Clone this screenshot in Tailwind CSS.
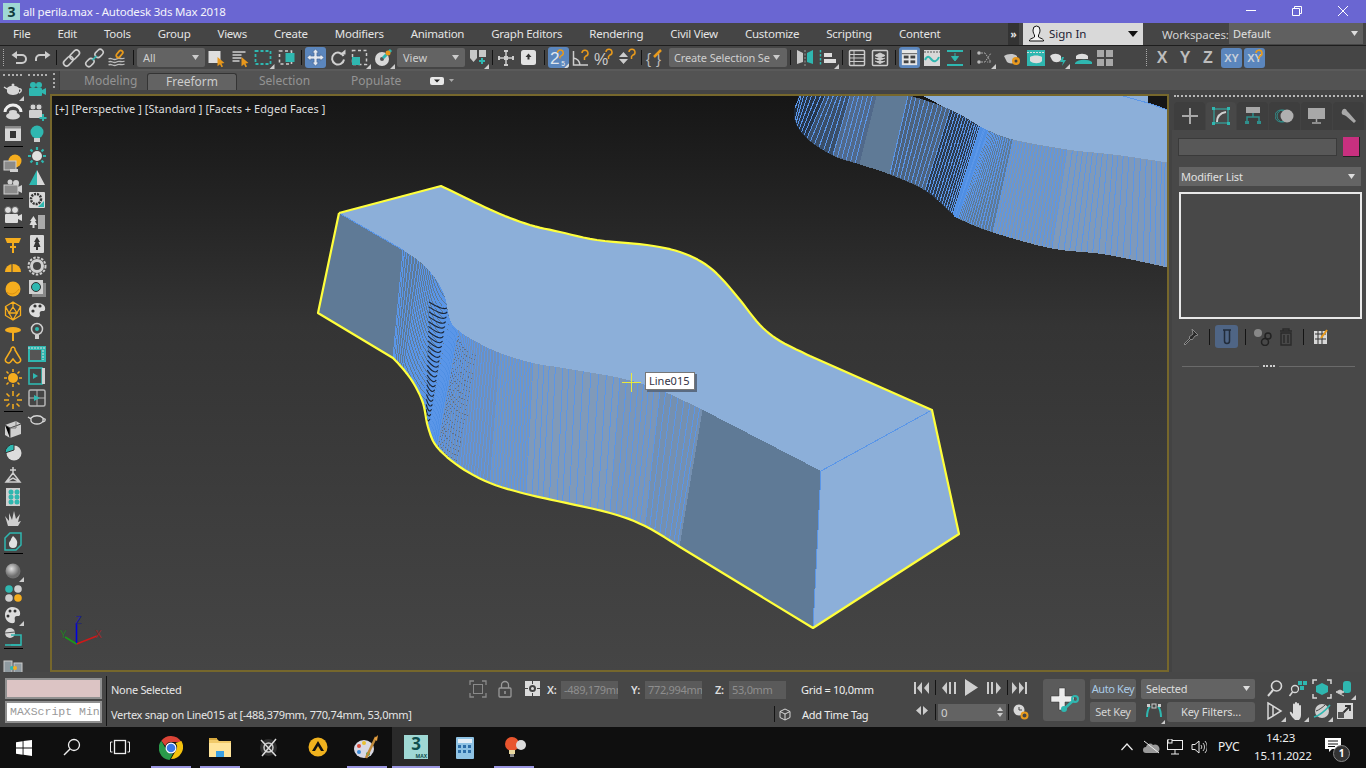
<!DOCTYPE html>
<html lang="en"><head><meta charset="utf-8"><title>all perila.max - Autodesk 3ds Max 2018</title>
<script src="https://cdn.jsdelivr.net/npm/@tailwindcss/browser@4"></script></head>
<body class="w-[1366px] h-[768px] overflow-hidden bg-[#444444] font-['Noto_Sans',sans-serif] text-[12px] text-[#e6e6e6] flex flex-col select-none">

<!-- title bar -->
<header class="h-[23px] shrink-0 bg-[#6a66d2] flex items-center text-white">
  <div class="ml-[3px] w-[17px] h-[17px] bg-[#9fd8d4] text-[#123c3c] font-bold text-[14px] leading-[17px] text-center">3</div>
  <span class="ml-[3px] text-[11.500px] tracking-[-0.2px] text-[#f4f4fb]">all perila.max - Autodesk 3ds Max 2018</span>
  <div class="ml-auto flex items-center">
    <svg class="w-[46px] h-[23px]" viewBox="0 0 46 23"><path d="M18 10.500h10" stroke="#fff"/></svg>
    <svg class="w-[46px] h-[23px]" viewBox="0 0 46 23"><path d="M18.500 8.500h7v7h-7zM20.500 8.500v-2h7v7h-2" fill="none" stroke="#fff"/></svg>
    <svg class="w-[46px] h-[23px]" viewBox="0 0 46 23"><path d="M18 6l10 10M28 6L18 16" stroke="#fff"/></svg>
  </div>
</header>

<!-- menu bar -->
<nav class="h-[23px] shrink-0 bg-[#454545] border-b border-[#1e1e1e] flex items-center relative">
  <div class="pl-[13px] flex gap-[27px] text-[11.500px] tracking-[-0.25px] text-[#e4e4e4]">
    <span>File</span><span>Edit</span><span>Tools</span><span>Group</span><span>Views</span><span>Create</span><span>Modifiers</span><span>Animation</span><span>Graph Editors</span><span>Rendering</span><span>Civil View</span><span>Customize</span><span>Scripting</span><span>Content</span>
  </div>
  <div class="absolute left-[1008px] top-0 w-[11px] h-[22px] bg-[#333333] text-[10px] leading-[22px] text-center font-bold">»</div>
  <div class="absolute left-[1023px] top-0 w-[120px] h-[22px] bg-[#d9d9d9] text-[#222233] flex items-center">
    <svg class="ml-[5px] w-[17px] h-[18px]" viewBox="0 0 17 18"><path d="M5 5a3.500 4 0 0 1 7 0c0 3-1 4-1.500 5v2c1 1 4 1.500 5 3v1H1.500v-1c1-1.500 4-2 5-3v-2C6 9 5 8 5 5z" fill="#f4f4f4" stroke="#111"/></svg>
    <span class="ml-[4px] text-[11.500px]">Sign In</span>
    <svg class="ml-auto mr-[5px] w-[10px] h-[6px]" viewBox="0 0 10 6"><path d="M0 0h10L5 6z" fill="#111"/></svg>
  </div>
  <span class="absolute left-[1162px] top-[3px] text-[11.500px] tracking-[-0.1px] text-[#d4d4d4]">Workspaces:</span>
  <div class="absolute left-[1229px] top-0 w-[134px] h-[21px] bg-[#606060] pl-[4px] leading-[21px] text-[11px] text-[#e0e0e0]">Default
    <svg class="absolute right-[5px] top-[8px] w-[7px] h-[5px]" viewBox="0 0 7 5"><path d="M0 0h7L3.500 5z" fill="#ddd"/></svg></div>
</nav>

<!-- main toolbar -->
<div class="h-[25px] shrink-0 bg-[#454545] border-b-2 border-[#5a5a5a] flex items-center">
  <div class="w-[9px]"><div class="ml-[3px] w-[2px] h-[17px] border-l border-dotted border-[#aaaaaa]"></div></div>
  <svg class="w-[22px] h-[22px] shrink-0" viewBox="0 0 22 22"><path d="M5 8h8a4 4 0 0 1 0 8H7" fill="none" stroke="#ccc" stroke-width="2"/><path d="M8 4L2.500 8 8 12z" fill="#ccc"/></svg>
  <svg class="w-[22px] h-[22px] shrink-0" viewBox="0 0 22 22"><path d="M17 8H9a4 4 0 0 0 -4 4v2" fill="none" stroke="#ccc" stroke-width="2"/><path d="M14 4l5.500 4L14 12z" fill="#ccc"/></svg>
  <div class="w-[7px] flex justify-center"><div class="w-[1px] h-[15px] bg-[#141414]"></div></div>
  <svg class="w-[23px] h-[22px] shrink-0" viewBox="0 0 22 22"><g fill="none" stroke="#ccc" stroke-width="1.600" transform="rotate(-45 11 11)"><rect x="1" y="8" width="11" height="6" rx="3"/><rect x="10" y="8" width="11" height="6" rx="3"/></g></svg>
  <svg class="w-[23px] h-[22px] shrink-0" viewBox="0 0 22 22"><g fill="none" stroke-width="1.600" transform="rotate(-45 11 11)"><rect x="0" y="8" width="9" height="6" rx="3" stroke="#ccc"/><rect x="13" y="8" width="9" height="6" rx="3" stroke="#ccc"/><path d="M8 11h6" stroke="#36b6b2"/></g></svg>
  <svg class="w-[23px] h-[22px] shrink-0" viewBox="0 0 22 22"><g fill="none" stroke-width="1.300"><path d="M2 12c3-2 5 2 8 0s5 1 8-1M2 15c3-2 5 2 8 0s5 1 8-1M2 18c3-2 5 2 8 0s5 1 8-1" stroke="#bbb"/><rect x="9" y="5" width="8" height="4" rx="2" transform="rotate(-50 13 7)" stroke="#e79a1c" stroke-width="1.800"/></g></svg>
  <div class="w-[8px] flex justify-center"><div class="w-[1px] h-[15px] bg-[#141414]"></div></div>
  <div class="w-[68px] h-[19px] bg-[#636363] rounded-[2px] relative pl-[6px] leading-[19px] text-[11px] text-[#cfcfcf]">All<svg class="absolute right-[6px] top-[7px] w-[7px] h-[5px]" viewBox="0 0 7 5"><path d="M0 0h7L3.500 5z" fill="#ccc"/></svg></div>
  <svg class="w-[23px] h-[22px] shrink-0" viewBox="0 0 22 22"><rect x="3" y="4" width="12" height="12" fill="#dedede"/><path d="M12 10l7 6-3 .5 1.500 3-1.500.7-1.500-3-2.500 2z" fill="#e8981c"/></svg>
  <svg class="w-[23px] h-[22px] ml-[1px] shrink-0" viewBox="0 0 22 22"><path d="M3 5h13M3 8h9M3 11h9M3 14h7" stroke="#cfcfcf" stroke-width="1.700"/><path d="M12 10l7 6-3 .5 1.500 3-1.500.7-1.500-3-2.500 2z" fill="#e8981c"/></svg>
  <svg class="w-[23px] h-[22px] shrink-0" viewBox="0 0 22 22"><rect x="3" y="4" width="15" height="13" fill="none" stroke="#2fb7b0" stroke-width="1.800" stroke-dasharray="3 2"/><path d="M22 17v5h-5z" fill="#ccc"/></svg>
  <svg class="w-[23px] h-[22px] shrink-0" viewBox="0 0 22 22"><rect x="4" y="4" width="12" height="13" fill="none" stroke="#ccc" stroke-width="1.600" stroke-dasharray="3 2.500"/><rect x="10" y="6" width="9" height="9" fill="#2fb7b0"/></svg>
  <div class="w-[7px] flex justify-center"><div class="w-[1px] h-[15px] bg-[#141414]"></div></div>
  <svg class="w-[21px] h-[21px] shrink-0 bg-[#5b86bd] rounded-[3px]" viewBox="0 0 22 22"><path d="M11 2l3.500 4h-2v3.500H16v-2l4 3.500-4 3.500v-2h-3.500V16h2L11 20l-3.500-4h2v-3.500H6v2L2 11l4-3.500v2h3.500V6h-2z" fill="#e4e9f0" stroke="#3b5e8e" stroke-width=".6"/></svg>
  <svg class="w-[22px] h-[22px] ml-[1px] shrink-0" viewBox="0 0 22 22"><path d="M16.500 9a6 6 0 1 0 .5 3.500" fill="none" stroke="#d0d0d0" stroke-width="2"/><path d="M12.500 7.500h6v-5z" fill="#d0d0d0"/></svg>
  <svg class="w-[22px] h-[22px] shrink-0" viewBox="0 0 22 22"><rect x="3.500" y="3.500" width="14" height="14" fill="none" stroke="#ccc" stroke-width="1.500" stroke-dasharray="3 2.500"/><rect x="3" y="10" width="8" height="8" fill="#2fb7b0"/><path d="M22 17v5h-5z" fill="#ccc"/></svg>
  <svg class="w-[22px] h-[22px] ml-[2px] shrink-0" viewBox="0 0 22 22"><circle cx="9" cy="12" r="7" fill="#d8d8d8"/><circle cx="9" cy="12" r="2" fill="#555"/><path d="M10 11l8-8" stroke="#2fb7b0" stroke-width="3"/><circle cx="15" cy="6" r="2.500" fill="#e8981c"/><path d="M22 17v5h-5z" fill="#ccc"/></svg>
  <div class="w-[68px] ml-[2px] h-[19px] bg-[#636363] rounded-[2px] relative pl-[6px] leading-[19px] text-[11px] text-[#cfcfcf]">View<svg class="absolute right-[6px] top-[7px] w-[7px] h-[5px]" viewBox="0 0 7 5"><path d="M0 0h7L3.500 5z" fill="#ccc"/></svg></div>
  <svg class="w-[22px] h-[22px] ml-[2px] shrink-0" viewBox="0 0 22 22"><path d="M3 3h7v8l-3.500 4L3 11zM12 3h7v7h-7z" fill="#c8c8c8"/><path d="M12 14h6M15 11v6" stroke="#2fb7b0" stroke-width="2"/><path d="M22 17v5h-5z" fill="#ccc"/></svg>
  <div class="w-[6px] flex justify-center"><div class="w-[1px] h-[15px] bg-[#141414]"></div></div>
  <svg class="w-[22px] h-[22px] shrink-0" viewBox="0 0 22 22"><path d="M11 3v16M3 11h16" stroke="#ccc" stroke-width="1.500"/><rect x="9" y="9" width="4" height="4" fill="#ccc"/><path d="M4 9v4M18 9v4M9 4h4M9 18h4" stroke="#ccc" stroke-width="2"/></svg>
  <svg class="w-[22px] h-[22px] ml-[1px] shrink-0" viewBox="0 0 22 22"><rect x="3" y="3" width="15" height="15" rx="2.500" fill="#e2e2e2"/><path d="M10.500 6.500l3 3.500h-2v2.500h-2V10h-2z" fill="#333"/></svg>
  <div class="w-[8px] flex justify-center"><div class="w-[1px] h-[15px] bg-[#141414]"></div></div>
  <svg class="w-[21px] h-[21px] shrink-0 bg-[#5b86bd] rounded-[3px]" viewBox="0 0 22 22"><text x="2" y="18" font-size="18" font-family="Liberation Sans" fill="#dfe5ee">2</text><path d="M10 6a3 3 0 1 1 4 3l-1.500 1.500V12" fill="none" stroke="#e89a1c" stroke-width="1.500"/><text x="14" y="20" font-size="7" font-family="Liberation Sans" fill="#eee">5</text><path d="M22 17v5h-5z" fill="#ddd"/></svg>
  <svg class="w-[22px] h-[22px] ml-[1px] shrink-0" viewBox="0 0 22 22"><path d="M3.500 4v14H18M3.500 11A8 8 0 0 1 10 18" fill="none" stroke="#ccc" stroke-width="1.500"/><path d="M12 6a3 3 0 1 1 4 3l-1.500 1.500V13" fill="none" stroke="#e89a1c" stroke-width="1.500"/></svg>
  <svg class="w-[22px] h-[22px] ml-[1px] shrink-0" viewBox="0 0 22 22"><text x="1" y="18" font-size="16" font-family="Liberation Sans" fill="#ccc">%</text><path d="M13 5a3 3 0 1 1 4 3l-1.500 1.500V12" fill="none" stroke="#e89a1c" stroke-width="1.500"/></svg>
  <svg class="w-[22px] h-[22px] ml-[1px] shrink-0" viewBox="0 0 22 22"><path d="M3 10l4.500-5 4.500 5zM3 12h9l-4.500 5z" fill="#ccc"/><path d="M13 5a3 3 0 1 1 4 3l-1.500 1.500V12" fill="none" stroke="#e89a1c" stroke-width="1.500"/></svg>
  <div class="w-[6px] flex justify-center"><div class="w-[1px] h-[15px] bg-[#141414]"></div></div>
  <svg class="w-[22px] h-[22px] shrink-0" viewBox="0 0 22 22"><text x="2" y="17" font-size="15" font-family="Liberation Sans" fill="#bbb">{</text><text x="12" y="17" font-size="15" font-family="Liberation Sans" fill="#bbb">}</text><path d="M10 10l7-7" stroke="#e89a1c" stroke-width="2.500"/></svg>
  <div class="w-[118px] ml-[3px] h-[19px] bg-[#636363] rounded-[2px] relative pl-[5px] leading-[19px] text-[11px] tracking-[-0.15px] text-[#cfcfcf] overflow-hidden whitespace-nowrap">Create Selection Se<svg class="absolute right-[7px] top-[7px] w-[7px] h-[5px]" viewBox="0 0 7 5"><path d="M0 0h7L3.500 5z" fill="#ccc"/></svg></div>
  <div class="w-[7px] flex justify-center"><div class="w-[1px] h-[15px] bg-[#141414]"></div></div>
  <svg class="w-[22px] h-[22px] shrink-0" viewBox="0 0 22 22"><path d="M9 6L3 3v14l6-2z" fill="#c8c8c8"/><path d="M13 6l6-3v14l-6-2z" fill="#2fb7b0"/><path d="M11 3v16" stroke="#999" stroke-dasharray="2 1.500"/></svg>
  <svg class="w-[22px] h-[22px] ml-[1px] shrink-0" viewBox="0 0 22 22"><path d="M3.500 3v16" stroke="#2fb7b0" stroke-width="1.500" stroke-dasharray="2.500 1.500"/><path d="M7 6h8v4H7zM7 12h12v4H7z" fill="#ddd"/><path d="M22 17v5h-5z" fill="#ccc"/></svg>
  <div class="w-[7px] flex justify-center"><div class="w-[1px] h-[15px] bg-[#141414]"></div></div>
  <svg class="w-[22px] h-[22px] shrink-0" viewBox="0 0 22 22"><rect x="3.500" y="3.500" width="15" height="15" rx="1" fill="none" stroke="#ccc" stroke-width="1.500"/><path d="M3 7.500h16M3 11h16M3 14.500h16M8 4v14" stroke="#ccc"/></svg>
  <svg class="w-[22px] h-[22px] ml-[1px] shrink-0" viewBox="0 0 22 22"><rect x="3.500" y="3.500" width="15" height="15" rx="1" fill="none" stroke="#ccc" stroke-width="1.500"/><path d="M11 6l5 2.500-5 2.500-5-2.500zM6 11l5 2.500 5-2.500M6 14l5 2.500 5-2.500" fill="#ccc" stroke="#ccc"/></svg>
  <div class="w-[8px] flex justify-center"><div class="w-[1px] h-[15px] bg-[#141414]"></div></div>
  <svg class="w-[21px] h-[21px] shrink-0 bg-[#5b86bd] rounded-[3px]" viewBox="0 0 22 22"><rect x="3" y="3" width="16" height="16" fill="#e6e6e6"/><path d="M3 7h16" stroke="#555"/><rect x="5" y="9" width="5" height="3" fill="#444"/><rect x="12" y="9" width="5" height="3" fill="#444"/><rect x="5" y="14" width="5" height="3" fill="#444"/><rect x="12" y="14" width="5" height="3" fill="#444"/></svg>
  <svg class="w-[22px] h-[22px] ml-[1px] shrink-0" viewBox="0 0 22 22"><rect x="3" y="3" width="16" height="16" fill="#d8d8d8"/><path d="M3 5h16" stroke="#555" stroke-dasharray="2 1"/><path d="M4 13c3-6 5-2 7 0s5 2 7-3" fill="none" stroke="#2fb7b0" stroke-width="2"/></svg>
  <svg class="w-[22px] h-[22px] ml-[1px] shrink-0" viewBox="0 0 22 22"><path d="M3 4h16M3 18h16" stroke="#2fb7b0" stroke-width="2"/><path d="M11 6v6M7.500 9.500L11 14l3.500-4.500z" stroke="#2fb7b0" fill="#2fb7b0"/></svg>
  <div class="w-[8px] flex justify-center"><div class="w-[1px] h-[15px] bg-[#141414]"></div></div>
  <svg class="w-[22px] h-[22px] shrink-0" viewBox="0 0 22 22"><path d="M7 6h4l6 9h-4M7 15h4l6-9" fill="none" stroke="#aaa" stroke-dasharray="2 1"/><g fill="#bbb"><circle cx="5" cy="6" r="1.800"/><circle cx="5" cy="15" r="1.800"/></g><path d="M22 17v5h-5z" fill="#ccc"/></svg>
  <svg class="w-[22px] h-[22px] ml-[5px] shrink-0" viewBox="0 0 22 22"><path d="M3 9c3-2 9-3 13 0v5c-2 3-8 3-10 1z" fill="#c8c8c8"/><circle cx="15" cy="14" r="4" fill="#e8981c"/><circle cx="15" cy="14" r="1.500" fill="#444"/></svg>
  <svg class="w-[22px] h-[22px] ml-[2px] shrink-0" viewBox="0 0 22 22"><rect x="2" y="3" width="18" height="16" fill="#2fb7b0"/><path d="M2 5.500h18" stroke="#ddd" stroke-dasharray="2 1"/><path d="M5 10c3-2 9-2 12 0v4c-2 3-9 3-12 0z" fill="#ddd"/></svg>
  <svg class="w-[22px] h-[22px] ml-[1px] shrink-0" viewBox="0 0 22 22"><path d="M2 9c3-3 8-3 11 0v4c-2 3-7 3-9 0z" fill="#ddd"/><path d="M14 10l-2 5h3l-1 4 4-6h-3l1-3z" fill="#2fb7b0"/><path d="M22 17v5h-5z" fill="#ccc"/></svg>
  <svg class="w-[22px] h-[22px] ml-[2px] shrink-0" viewBox="0 0 22 22"><path d="M4 9c3-3 9-3 12 0v3H4z" fill="#ddd"/><path d="M3 16c3-4 13-4 17-1v2H3z" fill="#2fb7b0"/></svg>
  <svg class="w-[22px] h-[22px] shrink-0" viewBox="0 0 22 22"><g fill="#a8a8a8"><rect x="3" y="3" width="7" height="7"/><rect x="12" y="3" width="7" height="7"/><rect x="3" y="12" width="7" height="7"/><rect x="12" y="12" width="7" height="7"/></g></svg>
  <div class="ml-[30px] w-[1px] h-[17px] border-l border-dotted border-[#aaaaaa]"></div>
  <div class="w-[22px] ml-[4px] text-center font-['Liberation_Sans',sans-serif] font-bold text-[16px] text-[#bdbdbd]">X</div>
  <div class="w-[22px] ml-[1px] text-center font-['Liberation_Sans',sans-serif] font-bold text-[16px] text-[#bdbdbd]">Y</div>
  <div class="w-[22px] ml-[1px] text-center font-['Liberation_Sans',sans-serif] font-bold text-[16px] text-[#bdbdbd]">Z</div>
  <div class="w-[21px] h-[20px] ml-[2px] bg-[#5b86bd] rounded-[3px] text-center leading-[20px] font-['Liberation_Sans',sans-serif] font-bold text-[11px] text-[#c8d0da]">XY</div>
  <div class="w-[21px] h-[20px] ml-[2px] bg-[#5b86bd] rounded-[3px] text-center leading-[20px] font-['Liberation_Sans',sans-serif] font-bold text-[11px] text-[#c8d0da] relative">XY<svg class="absolute left-[6px] top-[0px] w-[14px] h-[12px]" viewBox="0 0 14 12"><path d="M6 5a3 3 0 1 1 4 3l-1 1v2" fill="none" stroke="#e89a1c" stroke-width="1.600"/></svg></div>
</div>

<!-- body row -->
<div class="flex-1 flex min-h-0">
  <!-- left command bar -->
  <aside class="w-[50px] shrink-0 bg-[#454545] relative">
    <div class="absolute left-[3px] top-[3px] w-[19px] border-t-2 border-dotted border-[#b0b0b0]"></div>
    <div class="absolute left-[28px] top-[3px] w-[19px] border-t-2 border-dotted border-[#b0b0b0]"></div>
    <div class="flex pt-[8px] pl-[2px]">
      <div class="w-[22px] flex flex-col items-center">
        <svg class="w-[22px] h-[22px] shrink-0" viewBox="0 0 22 22"><path d="M5 9c3-3 9-3 12 0v4c-1 4-11 4-12 0z" fill="#d6d6d6"/><path d="M5 10L2 8M17 10c3-1 3 3 0 4" stroke="#d6d6d6" stroke-width="1.500" fill="none"/><circle cx="11" cy="6" r="1.500" fill="#d6d6d6"/><path d="M22 17v5h-5z" fill="#ccc"/></svg>
        <svg class="w-[22px] h-[22px] shrink-0" viewBox="0 0 22 22"><path d="M3 11a8 7 0 0 1 16 0" fill="none" stroke="#eee" stroke-width="3"/><ellipse cx="11" cy="15" rx="7" ry="3.500" fill="#d6d6d6"/><ellipse cx="11" cy="11" rx="4" ry="2" fill="#d6d6d6"/></svg>
        <svg class="w-[22px] h-[22px] shrink-0" viewBox="0 0 22 22"><rect x="3" y="3" width="16" height="15" fill="#d6d6d6"/><rect x="3" y="3" width="16" height="2.500" fill="#888"/><path d="M8 8h6v7H8z" fill="#333"/></svg>
        <div class="h-[7px] shrink-0 w-[19px] border-t border-black mt-[1px]"></div>
        <svg class="w-[22px] h-[22px] -mt-[1px] shrink-0" viewBox="0 0 22 22"><circle cx="13" cy="9" r="6.500" fill="#f5ad1e"/><rect x="2" y="9" width="12" height="9" fill="#8a8a8a" stroke="#d0d0d0"/><rect x="8" y="17" width="8" height="3" fill="#d0d0d0"/></svg>
        <svg class="w-[22px] h-[22px] mt-[2px] shrink-0" viewBox="0 0 22 22"><circle cx="14" cy="7" r="3" fill="#d0d0d0"/><circle cx="8" cy="6" r="2.500" fill="#d0d0d0"/><rect x="2" y="9" width="14" height="9" fill="#8a8a8a" stroke="#d0d0d0"/><path d="M16 11l4-2v8l-4-2z" fill="#d0d0d0"/></svg>
        <div class="h-[8px] shrink-0 w-[19px] border-t border-black mt-[0px]"></div>
        <svg class="w-[22px] h-[22px] -mt-[2px] shrink-0" viewBox="0 0 22 22"><circle cx="6" cy="6" r="3.500" fill="#ddd" stroke="#555"/><circle cx="13" cy="6" r="3.500" fill="#ddd" stroke="#555"/><rect x="3" y="10" width="13" height="9" rx="1" fill="#ddd"/><path d="M16 12l4-2v7l-4-2z" fill="#ddd"/></svg>
        <div class="h-[7px] shrink-0 w-[19px] border-t border-black mt-[1px]"></div>
        <svg class="w-[22px] h-[22px] shrink-0" viewBox="0 0 22 22"><path d="M3 4h16l-2 5H5z" fill="#f5ad1e"/><path d="M11 9v10M8 13h6" stroke="#f5ad1e" stroke-width="2"/></svg>
        <svg class="w-[22px] h-[22px] shrink-0" viewBox="0 0 22 22"><path d="M3 16a8 8 0 0 1 16 0z" fill="#f5ad1e"/><path d="M10 8v8" stroke="#454545"/></svg>
        <svg class="w-[22px] h-[22px] shrink-0" viewBox="0 0 22 22"><circle cx="11" cy="11" r="7.500" fill="#f5ad1e"/><path d="M5 14c3 3 8 3 12-3" fill="none" stroke="#d98f10"/></svg>
        <svg class="w-[22px] h-[22px] shrink-0" viewBox="0 0 22 22"><path d="M11 2l7.500 4.500v9L11 20l-7.500-4.500v-9zM11 7l4 6H7zM11 2v5M3.500 6.500L7 13M18.500 6.500L15 13M11 20l-4-7M11 20l4-7" fill="none" stroke="#f5ad1e" stroke-width="1.300"/></svg>
        <svg class="w-[22px] h-[22px] shrink-0" viewBox="0 0 22 22"><ellipse cx="11" cy="8" rx="8" ry="3" fill="#f5ad1e"/><path d="M11 10v9" stroke="#f5ad1e" stroke-width="2"/></svg>
        <svg class="w-[22px] h-[22px] shrink-0" viewBox="0 0 22 22"><path d="M11 3a2.500 2.500 0 0 0 -2 3L3.500 15a3 3 0 0 0 5 3l2.500-3 2.500 3a3 3 0 0 0 5-3L13 6a2.500 2.500 0 0 0 -2-3z" fill="none" stroke="#f5ad1e" stroke-width="1.500"/></svg>
        <svg class="w-[22px] h-[22px] mt-[1px] shrink-0" viewBox="0 0 22 22"><circle cx="11" cy="11" r="5" fill="#f5ad1e"/><path d="M11 2v3M11 17v3M2 11h3M17 11h3M4.500 4.500l2 2M15.500 15.500l2 2M4.500 17.500l2-2M15.500 6.500l2-2" stroke="#f5ad1e" stroke-width="1.500"/></svg>
        <svg class="w-[22px] h-[22px] shrink-0" viewBox="0 0 22 22"><path d="M11 2v5M11 15v5M2 11h5M15 11h5M4.500 4.500l3 3M14.500 14.500l3 3M4.500 17.500l3-3M14.500 7.500l3-3" stroke="#f5ad1e" stroke-width="1.500"/></svg>
        <div class="h-[7px] shrink-0 w-[19px] border-t border-black"></div>
        <svg class="w-[22px] h-[22px] shrink-0" viewBox="0 0 22 22"><path d="M3 7l11-4 5 3v10l-11 4-5-3z" fill="#cfcfcf"/><path d="M3 7l5 3v10M8 10l11-4" stroke="#444"/><path d="M14 3v7l-6 0" stroke="#777" fill="none"/></svg>
        <svg class="w-[22px] h-[22px] mt-[1px] shrink-0" viewBox="0 0 22 22"><circle cx="12" cy="12" r="7.500" fill="#dcdcdc"/><path d="M3 12a9 9 0 0 1 9-9v6z" fill="#2fb7b0" stroke="#333"/></svg>
        <svg class="w-[22px] h-[22px] mt-[1px] shrink-0" viewBox="0 0 22 22"><path d="M11 3v8M11 9l-7 9h14zM4 18l7-4 7 4M8 6h6" fill="none" stroke="#cfcfcf" stroke-width="1.500"/></svg>
        <svg class="w-[22px] h-[22px] shrink-0" viewBox="0 0 22 22"><rect x="4" y="2" width="14" height="18" fill="#cfcfcf"/><g fill="#2fb7b0"><circle cx="9" cy="6" r="2.500"/><circle cx="15" cy="6" r="2.500"/><circle cx="9" cy="11" r="2.500"/><circle cx="15" cy="11" r="2.500"/><circle cx="9" cy="16" r="2.500"/><circle cx="15" cy="16" r="2.500"/></g></svg>
        <svg class="w-[22px] h-[22px] shrink-0" viewBox="0 0 22 22"><path d="M3 8l4 5 0-8 3 7 2-9 2 8 4-5-2 8 3-1-3 5H6z" fill="#cfcfcf"/></svg>
        <svg class="w-[22px] h-[22px] shrink-0" viewBox="0 0 22 22"><path d="M3 8l5-5h11v12l-5 5H3z" fill="none" stroke="#2fb7b0" stroke-width="1.500"/><path d="M11 6c3 3 5 5 4 8a4 4 0 0 1 -8 0c0-3 2-3 2-5z" fill="#e2e2e2"/></svg>
        <div class="h-[6px] shrink-0 w-[19px] border-t border-black mt-[1px]"></div>
        <svg class="w-[22px] h-[22px] mt-[1px] shrink-0" viewBox="0 0 22 22"><defs><radialGradient id="sph" cx=".4" cy=".35"><stop offset="0" stop-color="#e0e0e0"/><stop offset="1" stop-color="#6e6e6e"/></radialGradient></defs><circle cx="11" cy="11" r="7.500" fill="url(#sph)"/><path d="M22 17v5h-5z" fill="#ccc"/></svg>
        <svg class="w-[22px] h-[22px] shrink-0" viewBox="0 0 22 22"><circle cx="7" cy="7" r="3.800" fill="#2fb7b0"/><circle cx="16" cy="7" r="3.800" fill="#cfcfcf"/><circle cx="7" cy="16" r="3.800" fill="#cfcfcf"/><circle cx="16" cy="16" r="3.800" fill="#f5ad1e"/></svg>
        <svg class="w-[22px] h-[22px] shrink-0" viewBox="0 0 22 22"><path d="M10 3c6 0 9 4 8 8-1 2-4 0-5 2s1 4-1 6c-5 1-9-3-9-8 0-4 3-8 7-8z" fill="#dcdcdc"/><circle cx="8" cy="7" r="1.500" fill="#333"/><circle cx="13" cy="7" r="1.500" fill="#333"/><circle cx="6" cy="12" r="1.500" fill="#333"/><path d="M22 17v5h-5z" fill="#ccc"/></svg>
        <svg class="w-[22px] h-[22px] shrink-0" viewBox="0 0 22 22"><circle cx="8" cy="7" r="5" fill="#d6d6d6"/><path d="M3 7l10-1" stroke="#555"/><path d="M9 9h10v10H9" fill="none" stroke="#2fb7b0" stroke-width="1.600"/><path d="M3 19h16" stroke="#2fb7b0" stroke-width="1.600"/></svg>
        <div class="h-[7px] shrink-0 w-[19px] border-t border-black"></div>
        <svg class="w-[22px] h-[22px] shrink-0" viewBox="0 0 22 22"><rect x="2" y="6" width="8" height="12" fill="#8f9aa0" stroke="#ccc"/><rect x="12" y="8" width="8" height="10" fill="#8f9aa0" stroke="#ccc"/><circle cx="10" cy="13" r="2" fill="#2fb7b0"/><circle cx="13" cy="13" r="2" fill="#f5ad1e"/></svg>
      </div>
      <div class="w-[24px] ml-[1px] flex flex-col items-center">
        <svg class="w-[22px] h-[22px] shrink-0" viewBox="0 0 22 22"><circle cx="7" cy="6" r="3" fill="#2fb7b0"/><circle cx="13" cy="6" r="3" fill="#2fb7b0"/><rect x="3" y="9" width="13" height="8" rx="1" fill="#2fb7b0"/><path d="M16 11l4-2v7l-4-2z" fill="#2fb7b0"/></svg>
        <svg class="w-[22px] h-[22px] shrink-0" viewBox="0 0 22 22"><circle cx="7" cy="6" r="3" fill="#d0d0d0" stroke="#555"/><circle cx="13" cy="6" r="3" fill="#d0d0d0" stroke="#555"/><rect x="3" y="9" width="13" height="8" rx="1" fill="#d0d0d0"/><path d="M17 13v7M13.500 17h7" stroke="#2fb7b0" stroke-width="2"/></svg>
        <svg class="w-[22px] h-[22px] shrink-0" viewBox="0 0 22 22"><circle cx="11" cy="9" r="6.500" fill="#2fb7b0"/><rect x="8" y="15" width="6" height="4" fill="#cfcfcf"/></svg>
        <svg class="w-[22px] h-[22px] shrink-0" viewBox="0 0 22 22"><circle cx="11" cy="11" r="5" fill="#e0e0e0"/><path d="M11 2v3M11 17v3M2 11h3M17 11h3M4.500 4.500l2 2M15.500 15.500l2 2M4.500 17.500l2-2M15.500 6.500l2-2" stroke="#2fb7b0" stroke-width="2.200"/></svg>
        <svg class="w-[22px] h-[22px] shrink-0" viewBox="0 0 22 22"><path d="M11 3v15H3z" fill="#2fb7b0"/><path d="M11 3l8 15h-8z" fill="#d8d8d8"/></svg>
        <svg class="w-[22px] h-[22px] shrink-0" viewBox="0 0 22 22"><rect x="3" y="3" width="16" height="16" rx="1" fill="#d8d8d8"/><circle cx="10" cy="10" r="5" fill="none" stroke="#333" stroke-width="2.500" stroke-dasharray="2 1"/><path d="M12 18l6-6v6z" fill="#2fb7b0"/></svg>
        <svg class="w-[22px] h-[22px] shrink-0" viewBox="0 0 22 22"><rect x="3" y="4" width="16" height="14" fill="#aaa"/><rect x="3" y="4" width="9" height="14" fill="#444"/><path d="M7.500 5l3 5h-1.500l2 4H8.500v3h-2v-3H3.500l2-4H4z" fill="#ddd"/></svg>
        <svg class="w-[22px] h-[22px] shrink-0" viewBox="0 0 22 22"><rect x="4" y="2" width="14" height="18" rx="1" fill="#d8d8d8"/><path d="M11 4l3 5h-1.500l2 5H12v3h-2v-3H7.500l2-5H8z" fill="#333"/></svg>
        <svg class="w-[22px] h-[22px] shrink-0" viewBox="0 0 22 22"><circle cx="11" cy="11" r="5.500" fill="none" stroke="#d0d0d0" stroke-width="3"/><circle cx="11" cy="11" r="8.500" fill="none" stroke="#d0d0d0" stroke-width="2" stroke-dasharray="2.500 1.500"/></svg>
        <svg class="w-[22px] h-[22px] shrink-0" viewBox="0 0 22 22"><rect x="6" y="6" width="14" height="14" fill="#888"/><rect x="3" y="3" width="14" height="14" fill="#d0d0d0"/><circle cx="10" cy="10" r="4.500" fill="#2fb7b0" stroke="#333"/></svg>
        <svg class="w-[22px] h-[22px] shrink-0" viewBox="0 0 22 22"><path d="M11 4c6 0 9 3 8 7-1 2-4 0-5 2s1 3-1 5c-5 1-10-2-10-7 0-4 4-7 8-7z" fill="#dcdcdc"/><circle cx="9" cy="7" r="1.600" fill="#333"/><circle cx="14" cy="7" r="1.600" fill="#333"/><circle cx="7" cy="12" r="1.600" fill="#333"/></svg>
        <svg class="w-[22px] h-[22px] shrink-0" viewBox="0 0 22 22"><circle cx="11" cy="8" r="5.500" fill="none" stroke="#cfcfcf" stroke-width="1.500"/><circle cx="11" cy="8" r="2" fill="#2fb7b0"/><path d="M9 14h4v4H9z" fill="#cfcfcf"/></svg>
        <svg class="w-[22px] h-[22px] shrink-0" viewBox="0 0 22 22"><rect x="2" y="3" width="18" height="16" fill="#2fb7b0"/><path d="M2 5h18" stroke="#ddd" stroke-dasharray="2 1"/><rect x="4" y="7" width="11" height="10" fill="#555"/><path d="M17 7v10" stroke="#ddd" stroke-dasharray="2 1"/></svg>
        <svg class="w-[22px] h-[22px] shrink-0" viewBox="0 0 22 22"><rect x="3" y="3" width="13" height="16" fill="none" stroke="#2fb7b0" stroke-width="1.600"/><rect x="16" y="3" width="3" height="16" fill="#cfcfcf"/><path d="M7 8l5 3-5 3z" fill="#2fb7b0"/></svg>
        <svg class="w-[22px] h-[22px] shrink-0" viewBox="0 0 22 22"><rect x="3" y="3" width="16" height="16" rx="1.500" fill="none" stroke="#b5b5b5" stroke-width="1.500"/><path d="M11 3v16M3 11h16" stroke="#b5b5b5"/><path d="M8 8l6 3-6 3z" fill="#2fb7b0"/></svg>
        <svg class="w-[22px] h-[22px] shrink-0" viewBox="0 0 22 22"><path d="M5 9c3-3 9-3 12 0v3c-2 4-10 4-12 0zM5 10L2 8M17 10c3-1 3 2 0 3" fill="none" stroke="#d6d6d6" stroke-width="1.300"/></svg>
      </div>
    </div>
  </aside>

  <div class="flex-1 flex flex-col min-w-0">
    <!-- ribbon -->
    <div class="h-[19px] shrink-0 flex items-stretch">
      <div class="w-[9px] flex items-center pl-[3px]"><div class="w-[2px] h-[15px] border-l-2 border-dotted border-[#aaaaaa]"></div></div>
      <div class="flex-1 bg-[#535353] border-l border-[#3c3c3c] relative flex items-center text-[12px] text-[#939393]">
        <span class="ml-[24px] w-[51px]">Modeling</span>
        <span class="ml-[12px] w-[90px] h-[17px] mt-[2px] self-start bg-[#636363] border border-b-0 border-[#343434] rounded-t-[3px] text-center leading-[16px] text-[#cdcdcd]">Freeform</span>
        <span class="ml-[22px] w-[92px]">Selection</span>
        <span class="w-[79px]">Populate</span>
        <svg class="w-[14px] h-[8px]" viewBox="0 0 14 8"><rect width="14" height="8" rx="2" fill="#e8e8e8"/><path d="M4 2.500h6L7 5.500z" fill="#222"/></svg>
        <svg class="ml-[5px] w-[5px] h-[3px]" viewBox="0 0 5 3"><path d="M0 0h5L2.500 3z" fill="#aaa"/></svg>
      </div>
    </div>
    <div class="h-[4px] shrink-0"></div>
    <div class="flex-1 flex min-h-0">
      <!-- viewport -->
      <main class="flex-1 min-w-0 relative border-2 border-[#76672c] overflow-hidden bg-linear-to-b from-[#161616] via-[#343434] via-40% to-[#454545]">
        <svg id="scene" class="absolute left-0 top-0" width="1115" height="574" viewBox="52 96 1115 574" shape-rendering="crispEdges">
          <defs><clipPath id="sideclip"><polygon id="sidepoly" points="0,0"/></clipPath></defs>
          <g id="far">
            <polygon id="fartop" points="923,96 1168,163 1168,96" fill="#8cafd9"/>
            <polygon points="1148,96 1148,103 1168,110 1168,96" fill="#161616"/>
            <path d="M1123 96L1148 103L1168 110" stroke="#5a96e8" fill="none"/>
          </g>
          <g id="farmesh"></g>
          <g id="mesh"></g>
          <polygon id="topface" points="339,213 441,186 932,410 821,471" fill="#8cafd9"/>
          <polygon points="821,471 932,410 959,534 813,628" fill="#8cafd9"/>
          <path d="M821 471L813 628M821 471L932 410M339 213L403 250" stroke="#5a96e8" fill="none"/>
          <polyline id="outline" shape-rendering="auto" points="339,213 441,186" fill="none" stroke="#ffff3c" stroke-width="2.200" stroke-linejoin="round"/>
          <path d="M622 382h19M631.500 373v19" stroke="#e8e83c"/>
          <g shape-rendering="auto">
            <path d="M76.500 644V623" stroke="#0000e0" stroke-width="1.600"/><path d="M76.500 644L97 636" stroke="#d01818" stroke-width="1.600"/><path d="M76.500 644L65 637" stroke="#1a9a1a" stroke-width="1.600"/>
            <text x="75.500" y="624" font-size="10" fill="#0000e0" font-family="Liberation Sans" stroke="#3e3e3e" stroke-width=".3">Z</text>
            <text x="95" y="638" font-size="10" fill="#d01818" font-family="Liberation Sans" stroke="#3e3e3e" stroke-width=".3">X</text>
            <text x="60" y="638" font-size="10" fill="#1a9a1a" font-family="Liberation Sans" stroke="#3e3e3e" stroke-width=".3">Y</text>
          </g>
        </svg>
        <div class="absolute left-[3px] top-[5px] text-[11px] leading-[16px] text-[#dedede] tracking-[0.05px] whitespace-pre">[+] [Perspective ] [Standard ] [Facets + Edged Faces ]</div>
        <div class="absolute left-[593px] top-[276px] w-[50px] h-[18px] bg-white border border-[#777777] text-[11px] leading-[16px] pl-[3px] text-[#333344] shadow-[2px_2px_0_#5a6b82]">Line015</div>
      </main>
      <!-- right command panel -->
      <aside class="w-[197px] shrink-0 bg-[#434343] relative">
        <div class="absolute left-[5px] right-[3px] top-[1px] border-t-2 border-dotted border-[#b8b8b8]"></div>
        <div class="flex pt-[8px] pl-[5px] gap-[1px] h-[36px]">
          <div class="w-[31px] bg-[#3e3e3e] rounded-t-[4px] flex items-center justify-center"><svg class="w-[18px] h-[18px]" viewBox="0 0 18 18"><path d="M9 1v16M1 9h16" stroke="#a8a8a8" stroke-width="2"/></svg></div>
          <div class="w-[30px] bg-[#484848] rounded-t-[4px] flex items-center justify-center"><svg class="w-[20px] h-[20px]" viewBox="0 0 20 20"><rect x="3" y="3" width="14" height="14" fill="none" stroke="#2fb7b0"/><g fill="#2fb7b0"><rect x="1" y="1" width="3" height="3"/><rect x="16" y="1" width="3" height="3"/><rect x="1" y="16" width="3" height="3"/><rect x="16" y="16" width="3" height="3"/></g><path d="M6 16c0-6 3-9 9-10" fill="none" stroke="#d0d0d0" stroke-width="2"/></svg></div>
          <div class="w-[31px] bg-[#3e3e3e] rounded-t-[4px] flex items-center justify-center"><svg class="w-[18px] h-[18px]" viewBox="0 0 18 18"><rect x="2" y="0" width="14" height="6" fill="#a8a8a8"/><path d="M9 6v4M3 14v-4h12v4" fill="none" stroke="#2f8f8c" stroke-width="1.500"/><rect x="1" y="14" width="4" height="3" fill="#2f8f8c"/><rect x="13" y="14" width="4" height="3" fill="#2f8f8c"/></svg></div>
          <div class="w-[31px] bg-[#3e3e3e] rounded-t-[4px] flex items-center justify-center"><svg class="w-[19px] h-[14px]" viewBox="0 0 19 14"><circle cx="6" cy="7" r="6" fill="none" stroke="#2f8f8c"/><circle cx="8" cy="7" r="6" fill="none" stroke="#2f8f8c"/><circle cx="12" cy="7" r="6.500" fill="#b0b0b0"/></svg></div>
          <div class="w-[31px] bg-[#3e3e3e] rounded-t-[4px] flex items-center justify-center"><svg class="w-[17px] h-[16px]" viewBox="0 0 17 16"><rect width="17" height="11" fill="#a8a8a8"/><path d="M8.500 11v3M4 15h9" stroke="#a8a8a8" stroke-width="1.500"/></svg></div>
          <div class="w-[31px] bg-[#3e3e3e] rounded-t-[4px] flex items-center justify-center"><svg class="w-[18px] h-[18px]" viewBox="0 0 18 18"><path d="M2 4c1-3 4-3 5 0l2 2 7 8-2 2-8-7-2-1c-2 0-3-2-2-4z" fill="#a8a8a8"/></svg></div>
        </div>
        <div class="absolute left-[3px] right-0 top-[36px] bottom-0 bg-[#484848]">
          <div class="absolute left-[6px] top-[8px] w-[159px] h-[18px] bg-[#585858] border border-[#3a3a3a]"></div>
          <div class="absolute left-[171px] top-[7px] w-[17px] h-[20px] bg-[#c8307f] border border-[#222222] border-l-0 border-t-0"></div>
          <div class="absolute left-[7px] top-[37px] w-[182px] h-[19px] bg-[#646464] text-[11px] tracking-[-0.2px] leading-[19px] pl-[2px] text-[#e0e0e0]">Modifier List<svg class="absolute right-[6px] top-[7px] w-[7px] h-[5px]" viewBox="0 0 7 5"><path d="M0 0h7L3.500 5z" fill="#ddd"/></svg></div>
          <div class="absolute left-[7px] top-[62px] w-[183px] h-[127px] border-2 border-[#e8e8e8] bg-[#484848]"></div>
          <div class="absolute left-[6px] top-[195px] w-[183px] h-[23px] flex items-center">
            <svg class="ml-[2px] w-[20px] h-[20px]" viewBox="0 0 20 20"><path d="M12 2l6 6-3 1-3 4-1-1-6 6-1-1 6-6-1-1 4-3z" fill="#2a2a2a" stroke="#888"/></svg>
            <div class="ml-[9px] w-[1px] h-[16px] bg-[#141414]"></div>
            <div class="ml-[5px] w-[23px] h-[23px] rounded-[3px] bg-[#4f6585] flex items-center justify-center"><svg class="w-[10px] h-[16px]" viewBox="0 0 10 16"><path d="M1 1h8M2.500 1v11a2.500 2.500 0 0 0 5 0V1" fill="none" stroke="#222c3a" stroke-width="1.500"/></svg></div>
            <div class="ml-[7px] w-[1px] h-[16px] bg-[#141414]"></div>
            <svg class="ml-[7px] w-[20px] h-[18px]" viewBox="0 0 20 18"><circle cx="5" cy="5" r="4" fill="#888"/><circle cx="12" cy="14" r="3.500" fill="none" stroke="#222" stroke-width="1.500"/><circle cx="15" cy="8" r="3" fill="none" stroke="#222" stroke-width="1.500"/></svg>
            <svg class="ml-[6px] w-[14px] h-[18px]" viewBox="0 0 14 18"><path d="M1 3h12M4 3V1h6v2M2 5h10v12H2zM5 7v8M9 7v8" fill="none" stroke="#2a2a2a" stroke-width="1.400"/></svg>
            <div class="ml-[10px] w-[1px] h-[16px] bg-[#141414]"></div>
            <svg class="ml-[9px] w-[16px] h-[16px]" viewBox="0 0 16 16"><rect x="1" y="2" width="13" height="13" fill="#d8d8d8"/><path d="M2 5h11M5 2v13M2 10h11M9 2v13" stroke="#333"/><path d="M8 9l6-8" stroke="#e89a1c" stroke-width="2"/></svg>
          </div>
          <div class="absolute left-[10px] top-[235px] w-[173px] flex items-center">
            <div class="flex-1 border-t border-[#6a6a6a]"></div>
            <div class="w-[12px] mx-[4px] h-[3px] border-t-2 border-dotted border-[#cfcfcf]"></div>
            <div class="flex-1 border-t border-[#6a6a6a]"></div>
          </div>
        </div>
      </aside>
    </div>
  </div>
</div>

<!-- status area -->
<section class="h-[55px] shrink-0 bg-[#474747] relative text-[11px] tracking-[-0.3px]">
  <div class="absolute left-[5px] top-[6px] w-[97px] h-[21px] bg-[#dcc4c4] border-2 border-[#909090]"></div>
  <div class="absolute left-[5px] top-[29px] w-[97px] h-[22px] bg-white border-2 border-[#909090] font-['Liberation_Mono',monospace] text-[11.500px] tracking-normal leading-[17px] pl-[3px] text-[#999999] overflow-hidden whitespace-nowrap">MAXScript Mini</div>
  <div class="absolute left-[106px] top-[4px] w-[1px] h-[50px] bg-[#141414]"></div>
  <span class="absolute left-[111px] top-[10px] text-[#e6e6e6]">None Selected</span>
  <span class="absolute left-[111px] top-[35px] text-[#e6e6e6]">Vertex snap on Line015 at [-488,379mm, 770,74mm, 53,0mm]</span>
  <svg class="absolute left-[469px] top-[8px] w-[18px] h-[18px]" viewBox="0 0 18 18"><path d="M1 5V1h4M13 1h4v4M17 13v4h-4M5 17H1v-4" fill="none" stroke="#8a8a8a" stroke-width="1.300"/><rect x="4.500" y="4.500" width="9" height="9" fill="none" stroke="#8a8a8a"/></svg>
  <svg class="absolute left-[497px] top-[8px] w-[16px] h-[18px]" viewBox="0 0 16 18"><rect x="2" y="8" width="12" height="9" rx="1" fill="none" stroke="#999" stroke-width="1.300"/><path d="M4.500 8V5a3.500 3.500 0 0 1 7 0v3" fill="none" stroke="#999" stroke-width="1.300"/><path d="M8 11v3" stroke="#999" stroke-width="1.500"/></svg>
  <svg class="absolute left-[525px] top-[9px] w-[15px] h-[15px]" viewBox="0 0 15 15"><rect width="15" height="15" fill="#dcdcdc"/><circle cx="7.500" cy="7.500" r="3.500" fill="#444"/><circle cx="7.500" cy="7.500" r="1.500" fill="#dcdcdc"/><path d="M7.500 0v3M7.500 12v3M0 7.500h3M12 7.500h3" stroke="#444"/></svg>
  <span class="absolute left-[547px] top-[10px] font-semibold text-[#dddddd]">X:</span>
  <div class="absolute left-[561px] top-[9px] w-[57px] h-[18px] bg-[#5a5a5a] text-[#8e8e8e] text-[11px] leading-[18px] pl-[3px] overflow-hidden whitespace-nowrap">-489,179mm</div>
  <span class="absolute left-[631px] top-[10px] font-semibold text-[#dddddd]">Y:</span>
  <div class="absolute left-[645px] top-[9px] w-[57px] h-[18px] bg-[#5a5a5a] text-[#8e8e8e] text-[11px] leading-[18px] pl-[3px] overflow-hidden whitespace-nowrap">772,994mm</div>
  <span class="absolute left-[715px] top-[10px] font-semibold text-[#dddddd]">Z:</span>
  <div class="absolute left-[729px] top-[9px] w-[57px] h-[18px] bg-[#5a5a5a] text-[#8e8e8e] text-[11px] leading-[18px] pl-[3px] overflow-hidden whitespace-nowrap">53,0mm</div>
  <span class="absolute left-[801px] top-[10px] text-[#eeeeee]">Grid = 10,0mm</span>
  <div class="absolute left-[774px] top-[34px] w-[1px] h-[16px] bg-[#141414]"></div>
  <svg class="absolute left-[779px] top-[36px] w-[12px] h-[13px]" viewBox="0 0 12 13"><path d="M6 1l5 2.500v6L6 12 1 9.500v-6zM1 3.500L6 6l5-2.500M6 6v6" fill="none" stroke="#d8d8d8"/></svg>
  <span class="absolute left-[802px] top-[35px] text-[#eeeeee]">Add Time Tag</span>
  <!-- playback -->
  <div class="absolute left-[914px] top-[7px] flex items-center text-[#c8c8c8]">
    <svg class="w-[16px] h-[12px]" viewBox="0 0 16 12"><path d="M1 0v12" stroke="#ccc" stroke-width="2"/><path d="M8 0v12L3 6zM15 0v12L10 6z" fill="#ccc"/></svg>
    <div class="ml-[5px] w-[1px] h-[15px] bg-[#141414]"></div>
    <svg class="ml-[5px] w-[16px] h-[12px]" viewBox="0 0 16 12"><path d="M6 0v12L1 6z" fill="#ccc"/><path d="M9 0v12M14 0v12" stroke="#ccc" stroke-width="2"/></svg>
    <svg class="ml-[7px] w-[15px] h-[17px]" viewBox="0 0 15 17"><path d="M1 0l13 8.500L1 17z" fill="#cfcfcf"/></svg>
    <svg class="ml-[7px] w-[16px] h-[12px]" viewBox="0 0 16 12"><path d="M2 0v12M6 0v12" stroke="#ccc" stroke-width="2"/><path d="M10 0v12l5-6z" fill="#ccc"/></svg>
    <div class="ml-[5px] w-[1px] h-[15px] bg-[#141414]"></div>
    <svg class="ml-[3px] w-[16px] h-[12px]" viewBox="0 0 16 12"><path d="M1 0v12L6 6zM8 0v12l5-6z" fill="#ccc"/><path d="M15 0v12" stroke="#ccc" stroke-width="2"/></svg>
  </div>
  <svg class="absolute left-[916px] top-[34px] w-[12px] h-[9px]" viewBox="0 0 12 9"><path d="M5 0v9L0 4.500zM7 0v9l5-4.500z" fill="#ccc"/></svg>
  <div class="absolute left-[935px] top-[32px] w-[1px] h-[16px] bg-[#141414]"></div>
  <div class="absolute left-[938px] top-[32px] w-[68px] h-[17px] bg-[#636363] pl-[3px] text-[11.500px] leading-[17px] text-[#d0d0d0]">0<svg class="absolute right-[3px] top-[3px] w-[6px] h-[10px]" viewBox="0 0 6 10"><path d="M0 4l3-4 3 4zM0 6l3 4 3-4z" fill="#ccc"/></svg></div>
  <div class="absolute left-[1008px] top-[32px] w-[1px] h-[16px] bg-[#141414]"></div>
  <svg class="absolute left-[1013px] top-[32px] w-[16px] h-[16px]" viewBox="0 0 16 16"><circle cx="6" cy="6" r="5.500" fill="#d8d8d8"/><path d="M6 3v3h3" stroke="#444" fill="none"/><circle cx="11.500" cy="11.500" r="3" fill="none" stroke="#e89a1c" stroke-width="2"/></svg>
  <!-- key -->
  <div class="absolute left-[1043px] top-[7px] w-[42px] h-[42px] bg-[#5b5b5b] rounded-[3px] flex items-center justify-center">
    <svg class="w-[30px] h-[28px]" viewBox="0 0 30 28"><path d="M10 2h6v8h9v6h-9v8h-6v-8H2v-6h8z" fill="#ececec" stroke="#333" stroke-width=".5"/><path d="M15 23l10-9" stroke="#2fb7b0" stroke-width="2.500"/><circle cx="26" cy="13" r="3" fill="none" stroke="#2fb7b0" stroke-width="2"/><circle cx="15" cy="23" r="3" fill="#2fb7b0"/></svg>
  </div>
  <div class="absolute left-[1090px] top-[7px] w-[46px] h-[20px] bg-[#5e5e5e] rounded-[2px] text-center leading-[20px] text-[#aacbe6] text-[11px] tracking-[-0.4px] whitespace-nowrap">Auto Key</div>
  <div class="absolute left-[1090px] top-[30px] w-[46px] h-[20px] bg-[#5e5e5e] rounded-[2px] text-center leading-[20px] text-[#d4d4d4] text-[11px] whitespace-nowrap">Set Key</div>
  <div class="absolute left-[1141px] top-[7px] w-[114px] h-[20px] bg-[#636363] rounded-[2px] pl-[5px] leading-[20px] text-[#dddddd] text-[11px]">Selected<svg class="absolute right-[5px] top-[7px] w-[7px] h-[5px]" viewBox="0 0 7 5"><path d="M0 0h7L3.500 5z" fill="#ddd"/></svg></div>
  <svg class="absolute left-[1143px] top-[30px] w-[22px] h-[22px]" viewBox="0 0 22 22"><path d="M4 15c0-5 1-8 3-11M18 15c0-5-1-8-3-11" fill="none" stroke="#2fb7b0" stroke-width="2"/><rect x="9" y="2" width="4" height="4" fill="none" stroke="#ccc"/><rect x="4" y="2" width="3" height="3" fill="#ccc"/><rect x="15" y="2" width="3" height="3" fill="#ccc"/><path d="M22 18v4h-4z" fill="#ccc"/></svg>
  <div class="absolute left-[1167px] top-[30px] w-[88px] h-[20px] bg-[#5e5e5e] rounded-[3px] text-center leading-[20px] text-[#dddddd] text-[11px] tracking-[-0.1px]">Key Filters...</div>
  <!-- nav -->
  <div class="absolute left-[1264px] top-[6px] grid grid-cols-4 gap-x-[1px] gap-y-[0px] w-[92px]">
    <svg class="w-[22px] h-[22px]" viewBox="0 0 22 22"><circle cx="12.500" cy="8" r="5" fill="none" stroke="#d8d8d8" stroke-width="1.600"/><path d="M9 12l-5 6" stroke="#d8d8d8" stroke-width="2"/></svg>
    <svg class="w-[22px] h-[22px]" viewBox="0 0 22 22"><circle cx="8" cy="11" r="3.500" fill="none" stroke="#d8d8d8" stroke-width="1.300"/><path d="M5.500 14l-3 4" stroke="#d8d8d8" stroke-width="1.600"/><rect x="11" y="3" width="4" height="4" fill="#2fb7b0"/><rect x="16" y="3" width="4" height="4" fill="#2fb7b0"/><rect x="13" y="8" width="4" height="4" fill="#2fb7b0"/></svg>
    <svg class="w-[22px] h-[22px]" viewBox="0 0 22 22"><path d="M2 6V2h4M16 2h4v4M20 16v4h-4M6 20H2v-4" fill="none" stroke="#d8d8d8" stroke-width="1.500"/><path d="M11 5l6 3v6l-6 3-6-3V8z" fill="#2fb7b0"/></svg>
    <svg class="w-[22px] h-[22px]" viewBox="0 0 22 22"><rect x="9" y="3" width="8" height="12" rx="3" fill="#2fb7b0"/><path d="M2 14l4-2 4 2-4 2zM6 16l4 2" stroke="#ccc" fill="#ccc"/><path d="M22 17v5h-5z" fill="#ccc"/></svg>
    <svg class="w-[22px] h-[22px]" viewBox="0 0 22 22"><path d="M4 3l13 8L4 19zM9 6v10" fill="none" stroke="#d8d8d8" stroke-width="1.500"/><path d="M22 17v5h-5z" fill="#ccc"/></svg>
    <svg class="w-[22px] h-[22px]" viewBox="0 0 22 22"><path d="M8 20c-3-3-6-7-5-8s2 1 3 2V4.500a1 1 0 0 1 2 0V10V3a1 1 0 0 1 2 0v7V4a1 1 0 0 1 2 0v6V6a1 1 0 0 1 2 0v9c0 2-1 4-2 5z" fill="#dcdcdc"/><path d="M22 17v5h-5z" fill="#ccc"/></svg>
    <svg class="w-[22px] h-[22px]" viewBox="0 0 22 22"><circle cx="11" cy="11" r="7" fill="#cfcfcf"/><path d="M3 17c4-1 11-6 16-12" fill="none" stroke="#2fb7b0" stroke-width="1.600"/><path d="M5 11c3-1 7-4 9-6" stroke="#444" fill="none"/><path d="M22 17v5h-5z" fill="#ccc"/></svg>
    <svg class="w-[22px] h-[22px]" viewBox="0 0 22 22"><rect x="3" y="3" width="16" height="16" fill="#d8d8d8"/><path d="M6 16L16 6M11 6h5v5" fill="none" stroke="#333" stroke-width="1.800"/><rect x="4" y="12" width="6" height="6" fill="#555"/></svg>
  </div>
</section>

<!-- taskbar -->
<footer class="h-[41px] shrink-0 bg-[#0f0f0f] relative text-white">
  <svg class="absolute left-[16px] top-[13px] w-[16px] h-[16px]" viewBox="0 0 16 16"><path d="M0 2.200l6.600-1V7.500H0zM7.500 1L16 0v7.500H7.500zM0 8.500h6.600v6.300l-6.600-1zM7.500 8.500H16V16l-8.500-1.200z" fill="#fff"/></svg>
  <svg class="absolute left-[63px] top-[11px] w-[18px] h-[18px]" viewBox="0 0 18 18"><circle cx="11" cy="7" r="5.500" fill="none" stroke="#eee" stroke-width="1.300"/><path d="M7 11l-6 6" stroke="#eee" stroke-width="1.500"/></svg>
  <svg class="absolute left-[110px] top-[12px] w-[20px] h-[16px]" viewBox="0 0 20 16"><rect x="4.500" y="1.500" width="11" height="13" fill="none" stroke="#eee" stroke-width="1.300"/><path d="M2.500 3h-2v10h2M17.500 3h2v10h-2" fill="none" stroke="#eee"/></svg>
  <svg class="absolute left-[159px] top-[9px] w-[24px] h-[24px]" viewBox="0 0 24 24"><path d="M12 0a12 12 0 0 1 10.400 6H12a6 6 0 0 0 -5.700 4L2.300 4.700A12 12 0 0 1 12 0z" fill="#db4437"/><path d="M22.400 6A12 12 0 0 1 12 24l5.200-9A6 6 0 0 0 16.500 8z" fill="#f4c20d" transform="translate(0 -1)"/><path d="M2.300 4.700L7 13a6 6 0 0 0 7 4.700L10.500 24A12 12 0 0 1 2.300 4.700z" fill="#2a9a4a"/><circle cx="12" cy="12" r="5.500" fill="#fff"/><circle cx="12" cy="12" r="4.300" fill="#3b78e7"/></svg>
  <svg class="absolute left-[209px] top-[10px] w-[22px] h-[21px]" viewBox="0 0 22 21"><path d="M0 2h8l2 2h12v16H0z" fill="#f0c969"/><path d="M0 6h22v14H0z" fill="#ffe49a"/><path d="M7 14h8v6H7z" fill="#3aa0e4"/><path d="M0 1h8v2H0z" fill="#d8a93e"/></svg>
  <svg class="absolute left-[258px] top-[10px] w-[21px] h-[21px]" viewBox="0 0 21 21"><circle cx="10.500" cy="10.500" r="8.500" fill="#2e2e2e"/><circle cx="10.500" cy="10.500" r="4.500" fill="none" stroke="#ccc" stroke-width="1.500"/><path d="M3 3l15 16M18 2L4 19" stroke="#dcdcdc" stroke-width="1.500"/></svg>
  <svg class="absolute left-[308px] top-[10px] w-[20px] h-[20px]" viewBox="0 0 20 20"><circle cx="10" cy="10" r="9.500" fill="#f0b21e"/><path d="M10 4l6 10h-3l-3-5-3 5H4z" fill="#111"/></svg>
  <svg class="absolute left-[354px] top-[7px] w-[25px] h-[26px]" viewBox="0 0 25 26"><ellipse cx="10" cy="15" rx="10" ry="9" fill="#d8d8e4"/><circle cx="5" cy="12" r="2" fill="#d84a3a"/><circle cx="10" cy="9" r="2" fill="#e8c030"/><circle cx="5" cy="18" r="2" fill="#3a8ad8"/><circle cx="14" cy="20" r="2" fill="#3aa84a"/><path d="M12 24L22 3" stroke="#c08a3a" stroke-width="2.500"/><path d="M20 5l4-4-1 6z" fill="#e8a040"/></svg>
  <div class="absolute left-[392px] top-0 w-[48px] h-[41px] bg-[#2a2a2a] flex justify-center pt-[8px]"><div class="w-[24px] h-[24px] bg-[#9fd8d4] text-[#0f4e4e] font-bold text-[17px] leading-[18px] text-center relative">3<span class="absolute right-[1px] bottom-[0px] text-[5px] leading-[6px]">MAX</span></div></div>
  <svg class="absolute left-[456px] top-[10px] w-[18px] h-[22px]" viewBox="0 0 18 22"><rect width="18" height="22" rx="1" fill="#8fc3e4"/><rect x="2" y="2" width="14" height="4" fill="#e4eef6"/><g fill="#2d6ea8"><rect x="2" y="8" width="3" height="3"/><rect x="7" y="8" width="3" height="3"/><rect x="12" y="8" width="3" height="3"/><rect x="2" y="13" width="3" height="3"/><rect x="7" y="13" width="3" height="3"/><rect x="12" y="13" width="3" height="3"/></g></svg>
  <svg class="absolute left-[503px] top-[9px] w-[24px] h-[24px]" viewBox="0 0 24 24"><circle cx="9" cy="8" r="7" fill="#e8552e"/><path d="M6 14h6v4H6z" fill="#e8d8a0"/><rect x="7" y="18" width="4" height="3" fill="#888"/><circle cx="18" cy="9" r="5" fill="#dcdcdc"/></svg>
  <div class="absolute left-[151px] bottom-0 w-[40px] h-[2px] bg-[#9a96e0]"></div>
  <div class="absolute left-[200px] bottom-0 w-[40px] h-[2px] bg-[#9a96e0]"></div>
  <div class="absolute left-[347px] bottom-0 w-[40px] h-[2px] bg-[#9a96e0]"></div>
  <div class="absolute left-[392px] bottom-0 w-[48px] h-[2px] bg-[#9a96e0]"></div>
  <div class="absolute left-[494px] bottom-0 w-[40px] h-[2px] bg-[#9a96e0]"></div>
  <!-- tray -->
  <svg class="absolute left-[1121px] top-[16px] w-[12px] h-[8px]" viewBox="0 0 12 8"><path d="M.5 7L6 1l5.500 6" fill="none" stroke="#eee" stroke-width="1.200"/></svg>
  <svg class="absolute left-[1143px] top-[13px] w-[17px] h-[14px]" viewBox="0 0 17 14"><path d="M3 13a3 3 0 0 1 0-6 4 4 0 0 1 7-2 3.500 3.500 0 0 1 4 8z" fill="#9a9a9a"/><path d="M1 1l15 12" stroke="#eee"/></svg>
  <svg class="absolute left-[1167px] top-[12px] w-[16px] h-[16px]" viewBox="0 0 16 16"><rect x=".5" y="1.500" width="15" height="9" fill="none" stroke="#eee"/><path d="M8 10.500V15M4 15h8" stroke="#eee"/><rect x="1" y="0" width="4" height="4" fill="#111" stroke="#eee"/></svg>
  <svg class="absolute left-[1191px] top-[13px] w-[16px] h-[14px]" viewBox="0 0 16 14"><path d="M1 4.500h3L8 1v12L4 9.500H1z" fill="none" stroke="#eee"/><path d="M10 5a3 3 0 0 1 0 4M12 3a6 6 0 0 1 0 8M14 1a9 9 0 0 1 0 12" fill="none" stroke="#ccc"/></svg>
  <span class="absolute left-[1218px] top-[12px] text-[12px] leading-[16px] text-[#f0f0f0]">РУС</span>
  <span class="absolute left-[1266px] top-[3px] text-[11.500px] leading-[16px] text-[#f0f0f0]">14:23</span>
  <span class="absolute left-[1254px] top-[21px] text-[11.500px] leading-[16px] tracking-[-0.1px] text-[#f0f0f0]">15.11.2022</span>
  <svg class="absolute left-[1325px] top-[11px] w-[16px] h-[15px]" viewBox="0 0 16 15"><path d="M0 0h16v11H7l-3 3v-3H0z" fill="#fff"/><path d="M3 3h10M3 6h10M3 8.500h7" stroke="#111"/></svg>
  <div class="absolute left-[1333px] top-[18px] w-[17px] h-[17px] rounded-full bg-[#333333] border border-[#888888] text-center text-[10px] leading-[15px] font-bold">1</div>
</footer>

<script>
(function(){
var NS='http://www.w3.org/2000/svg';
function el(p,n,a){var e=document.createElementNS(NS,n);for(var k in a)e.setAttribute(k,a[k]);p.appendChild(e);return e;}
function lerp(a,b,t){return a+(b-a)*t;}
function cr(a,b,c,d,t){var t2=t*t,t3=t2*t;return .5*((2*b)+(-a+c)*t+(2*a-5*b+4*c-d)*t2+(-a+3*b-3*c+d)*t3);}
function at(K,i,t,lo,hi){
  if(i<lo||i>=hi){var r=[];for(var c=0;c<4;c++)r.push(lerp(K[i][c],K[i+1][c],t));return r;}
  var r=[];for(var c=0;c<4;c++){r.push(cr(K[Math.max(i-1,lo)][c],K[i][c],K[i+1][c],K[Math.min(i+2,hi)][c],t));}
  return r;
}
function side(g,K,F,lo,hi){
  for(var i=0;i<F.length;i++){
    if(!F[i][0])continue;
    var n=Math.max(F[i][1],1),sub=Math.max(n,4);
    for(var s=0;s<sub;s++){
      var A=at(K,i,s/sub,lo,hi),B=at(K,i,(s+1)/sub,lo,hi);
      el(g,'polygon',{points:A[0]+','+A[1]+' '+B[0]+','+B[1]+' '+B[2]+','+B[3]+' '+A[2]+','+A[3],fill:F[i][0],stroke:F[i][0]});
    }
  }
  for(var i=0;i<F.length;i++){
    if(!F[i][0])continue;
    for(var s=0;s<F[i][1];s++){
      var A=at(K,i,s/F[i][1],lo,hi);
      el(g,'line',{x1:A[0],y1:A[1],x2:A[2],y2:A[3],stroke:'#5a96e8'});
    }
  }
}
function curve(pts,steps){
  var o=[];
  for(var i=0;i<pts.length-1;i++){
    var a=pts[Math.max(i-1,0)],b=pts[i],c=pts[i+1],d=pts[Math.min(i+2,pts.length-1)];
    for(var s=0;s<steps;s++){var t=s/steps;o.push([cr(a[0],b[0],c[0],d[0],t),cr(a[1],b[1],c[1],d[1],t)]);}
  }
  o.push(pts[pts.length-1]);return o;
}
function str(l){return l.map(function(p){return p[0].toFixed(1)+','+p[1].toFixed(1);}).join(' ');}

var K=[[339,213,318,313],[403,250,393,358],[420,262,404,370],[435,278,414,384],[445,297,423,403],[450,320,428,427],[458,330,437,447],[473,340,460,467],[500,353,490,483],[533,363,526,494],[563,368,557,501],[620,378,610,513],[660,390,645,526],[703,410,680,547],[821,471,813,628]];
var F=[['#5f7a96',0],['#5f7a96',7],['#5f7a96',9],['#5f7a96',10],['#5f7a96',9],['#4f8fe4',8],['#6f90bc',9],['#7290b8',10],['#7a96b8',12],['#809ab9',5],['#809ab9',8],['#7c96b6',7],['#7590b0',8],['#5f7a96',0]];
var m=document.getElementById('mesh');
side(m,K,F,1,13);

var topArc=curve([[441,186],[470,200],[500,214],[530,225],[560,232],[597,240],[647,245],[680,252],[705,264],[722,279],[740,300],[760,325],[780,341],[810,356]],6);
var tops=[],bots=[];
for(var i=1;i<13;i++){for(var s=0;s<6;s++){var p=at(K,i,s/6,1,13);tops.push([p[0],p[1]]);bots.push([p[2],p[3]]);}}
tops.push([703,410]);bots.push([680,547]);
var face=[[339,213]].concat(topArc,[[932,410],[821,471]],tops.slice().reverse());
document.getElementById('topface').setAttribute('points',str(face));
var outline=[[339,213]].concat(topArc,[[932,410],[959,534],[813,628]],bots.slice().reverse(),[[318,313],[339,213]]);
document.getElementById('outline').setAttribute('points',str(outline));
el(m,'path',{d:'M339 213L318 313',stroke:'#5a96e8',fill:'none'});
var sidePoly=tops.concat(bots.slice().reverse());
document.getElementById('sidepoly').setAttribute('points',str(sidePoly));
var hatch=el(m,'g',{'clip-path':'url(#sideclip)'});
for(var j=0;j<24;j++){var t=j/23,rx=lerp(448,430,t),ry=lerp(308,420,t),w=lerp(19,4,t);
  el(hatch,'path',{d:'M'+(rx-w)+' '+(ry-6)+'Q'+(rx-3)+' '+(ry+4)+' '+rx+' '+(ry-1),fill:'none',stroke:'#1a2536','shape-rendering':'auto','stroke-width':1.100});}
for(var j=0;j<26;j++){var t=j/25,rx=lerp(458,438,t),ry=lerp(336,450,t);
  el(hatch,'path',{d:'M'+rx+' '+ry+'Q'+(rx+3)+' '+(ry+16)+' '+(rx+20)+' '+(ry+20),fill:'none',stroke:'#5d6f88','stroke-dasharray':'1 2'});}

var Q=[[800,96,795,108],[801,96,795,120],[825,96,807,138],[850,96,833,155],[877,96,860,164],[908,96,890,174],[950,110,925,190],[980,127,953,214],[988,131,958,218],[1013,140,993,232],[1067,150,1052,248],[1113,155,1105,254],[1168,163,1168,267]];
var G=[['#1c2838',1],['#26354a',6],['#3a4e68',6],['#51698a',6],['#5f7a96',0],['#4d627c',10],['#2d3b4e',13],['#4f8fe4',3],['#5f7a96',15],['#7a96b8',18],['#809ab9',9],['#7f99ba',11]];
side(document.getElementById('farmesh'),Q,G,0,12);
var ft=[[923,96]];for(var i=6;i<12;i++){for(var s=0;s<6;s++){var p=at(Q,i,s/6,0,12);ft.push([p[0],p[1]]);}}
ft.push([1168,163],[1168,96]);
document.getElementById('fartop').setAttribute('points',str(ft));
})();
</script>
</body></html>
